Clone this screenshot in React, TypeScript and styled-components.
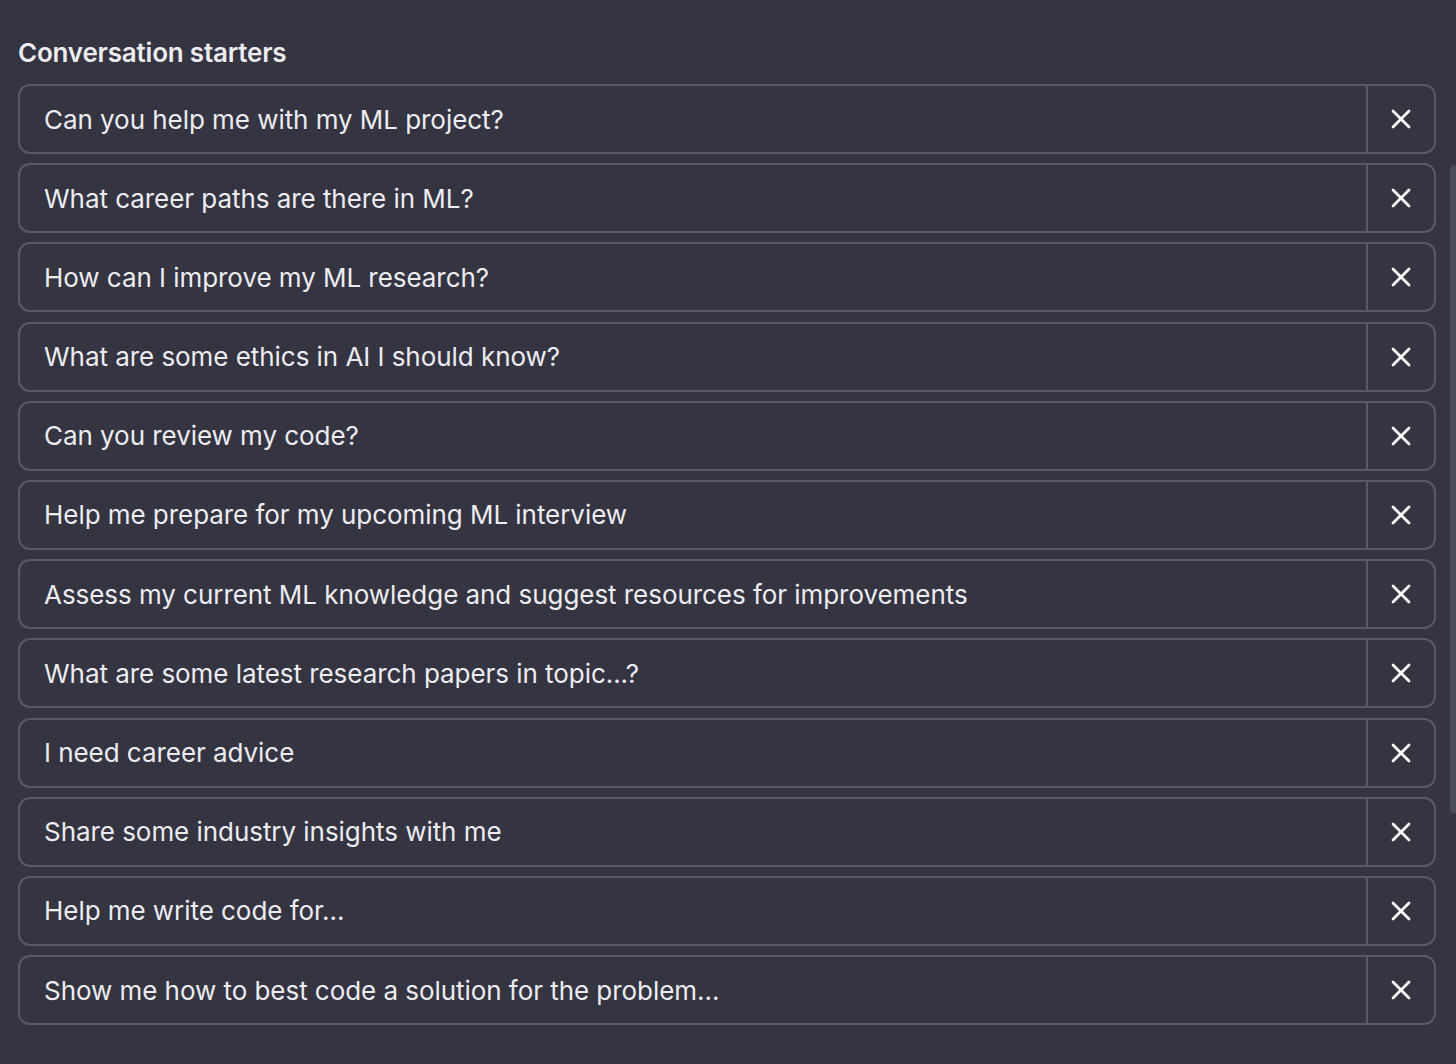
import React from 'react'
import styled, { createGlobalStyle } from 'styled-components'

const GlobalStyle = createGlobalStyle`
  html, body {
    margin: 0;
    padding: 0;
    background: #343541;
    overflow: hidden;
  }
  body {
    font-family: Inter, "Noto Sans", "Liberation Sans", sans-serif;
    color: #ececf1;
  }
`

const Page = styled.div`
  position: relative;
  width: 1456px;
  height: 1064px;
  background: #343541;
  box-sizing: border-box;
  padding: 36px 20px 0 18px;
`

const Heading = styled.div`
  font-size: 26px;
  font-weight: 600;
  line-height: 34px;
  color: #ececf1;
  margin-bottom: 14px;
  letter-spacing: -0.2px;
`

const List = styled.div`
  display: flex;
  flex-direction: column;
  gap: 9.2px;
`

const Row = styled.div`
  display: flex;
  height: 70px;
  box-sizing: border-box;
  border: 2px solid #585a6a;
  border-radius: 12px;
  overflow: hidden;
`

const StarterText = styled.div`
  flex: 1;
  display: flex;
  align-items: center;
  padding-left: 24px;
  font-size: 26px;
  color: #ececf1;
  letter-spacing: -0.05px;
  white-space: nowrap;
`

const CloseButton = styled.button`
  width: 68px;
  border: none;
  border-left: 2px solid #585a6a;
  background: transparent;
  display: flex;
  align-items: center;
  justify-content: center;
  padding: 0;
  cursor: pointer;
`

const Scrollbar = styled.div`
  position: absolute;
  right: 0;
  top: 165px;
  width: 6px;
  height: 648px;
  background: #4b4c59;
  border-radius: 4px 0 0 4px;
`

const CloseIcon = () => (
  <svg width="20" height="20" viewBox="0 0 20 20" fill="none">
    <path d="M2 2L18 18M18 2L2 18" stroke="#ffffff" strokeWidth="2.8" strokeLinecap="round" />
  </svg>
)

const starters = [
  'Can you help me with my ML project?',
  'What career paths are there in ML?',
  'How can I improve my ML research?',
  'What are some ethics in AI I should know?',
  'Can you review my code?',
  'Help me prepare for my upcoming ML interview',
  'Assess my current ML knowledge and suggest resources for improvements',
  'What are some latest research papers in topic...?',
  'I need career advice',
  'Share some industry insights with me',
  'Help me write code for...',
  'Show me how to best code a solution for the problem...',
]

const App: React.FC = () => {
  return (
    <>
      <GlobalStyle />
      <Page>
        <Heading>Conversation starters</Heading>
        <List>
          {starters.map((text) => (
            <Row key={text}>
              <StarterText>{text}</StarterText>
              <CloseButton aria-label="Remove">
                <CloseIcon />
              </CloseButton>
            </Row>
          ))}
        </List>
        <Scrollbar />
      </Page>
    </>
  )
}

export default App
